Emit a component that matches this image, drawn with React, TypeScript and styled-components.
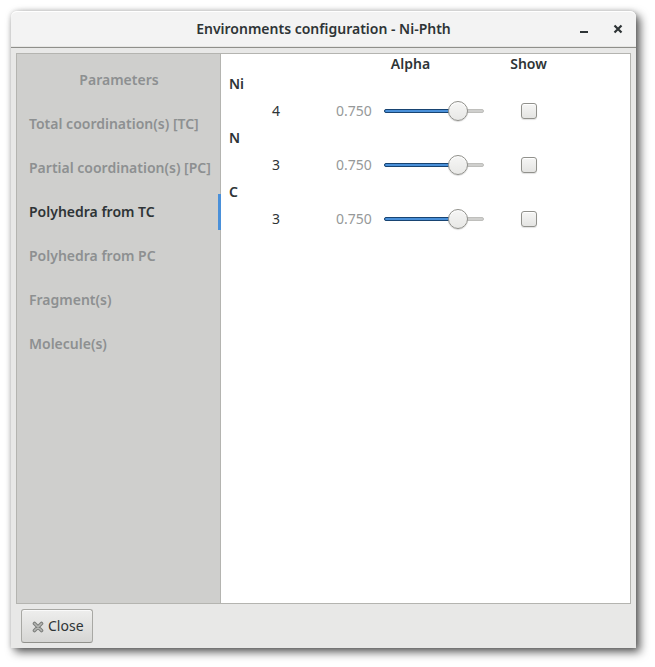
import { useState } from "react";
import styled, { createGlobalStyle } from "styled-components";

const GlobalStyle = createGlobalStyle`
  *, *::before, *::after { box-sizing: border-box; }
  body {
    margin: 0;
    background: #fff;
    color: #2e3436;
    font-family: "Noto Sans", "Open Sans", sans-serif;
    font-size: 14px;
    line-height: 20px;
  }
  button, input { font: inherit; color: inherit; margin: 0; }
`;

const Desktop = styled.main`
  display: flex;
  min-height: 100vh;
  padding: 11px 19px 19px 11px;
`;

const Window = styled.section`
  flex: 1;
  display: flex;
  flex-direction: column;
  min-width: 0;
  background: #e8e8e7;
  border-radius: 6px 6px 0 0;
  box-shadow: 0 0 5px rgba(0, 0, 0, 0.18), 4px 4px 10px rgba(0, 0, 0, 0.65);
`;

const TitleBar = styled.header`
  display: grid;
  grid-template-columns: 1fr auto 1fr;
  align-items: center;
  height: 37px;
  padding: 0 6px;
  background: #f3f3f3;
  border-bottom: 1px solid #8f8f8b;
  border-radius: 6px 6px 0 0;
  box-shadow: inset 0 1px #fff, inset 0 -1px #e6e6e4;
`;

const Title = styled.h1`
  grid-column: 2;
  margin: 0;
  font-size: 14px;
  font-weight: 600;
`;

const WindowControls = styled.div`
  display: flex;
  justify-content: flex-end;
  gap: 10px;
`;

const WindowButton = styled.button`
  display: grid;
  place-items: center;
  width: 24px;
  height: 24px;
  padding: 0;
  border: 0;
  background: none;
`;

const Notebook = styled.div`
  flex: 1;
  display: flex;
  margin: 5px 5px 0;
  border: 1px solid #b4b4b0;
  background: #fff;
`;

const TabList = styled.div`
  display: flex;
  flex-direction: column;
  gap: 8px;
  width: 204px;
  flex: none;
  padding: 8px 0;
  background: #cfcfcd;
  border-right: 1px solid #b4b4b0;
`;

const Tab = styled.button<{ $active: boolean; $centered: boolean }>`
  height: 36px;
  margin-right: -1px;
  padding: 0 9px 0 12px;
  border: 0;
  border-right: 3px solid ${(p) => (p.$active ? "#4a90d9" : "transparent")};
  background: none;
  color: ${(p) => (p.$active ? "#2e3436" : "#8d9091")};
  font-weight: 600;
  text-align: ${(p) => (p.$centered ? "center" : "left")};
  white-space: nowrap;
`;

const Panel = styled.div`
  flex: 1;
  min-width: 0;
`;

const Table = styled.table`
  width: 346px;
  table-layout: fixed;
  border-collapse: collapse;
`;

const Column = styled.col<{ $width: number }>`
  width: ${(p) => p.$width}px;
`;

const HeadCell = styled.th`
  height: 20px;
  padding: 0;
  font-weight: 600;
`;

const ElementCell = styled.th`
  height: 20px;
  padding: 0 8px;
  font-weight: 600;
  text-align: left;
`;

const Cell = styled.td`
  height: 34px;
  padding: 0;
  text-align: center;
`;

const AlphaControl = styled.div`
  display: flex;
  align-items: center;
  gap: 12px;
  padding: 0 5px;
`;

const AlphaValue = styled.output`
  width: 36px;
  color: #969999;
`;

const Slider = styled.div`
  display: grid;
  grid-template-columns: 100px;
  align-items: center;
`;

const Trough = styled.div`
  grid-area: 1 / 1;
  height: 4px;
  border: 1px solid #bfbfbc;
  border-radius: 2px;
  background: #cfcfcd;
`;

const Fill = styled.div`
  height: 4px;
  margin: -1px;
  border: 1px solid #184472;
  border-radius: 2px;
  background: #4a90d9;
`;

const Range = styled.input`
  grid-area: 1 / 1;
  appearance: none;
  width: 116px;
  height: 20px;
  margin: 0 -8px;
  background: transparent;

  &::-webkit-slider-thumb {
    appearance: none;
    width: 20px;
    height: 20px;
    border: 1px solid #91918c;
    border-radius: 50%;
    background: linear-gradient(#f6f6f5, #e8e8e6);
    box-shadow: inset 0 1px #fff, 0 1px 1px rgba(0, 0, 0, 0.15);
  }
`;

const CheckBox = styled.input`
  appearance: none;
  display: block;
  width: 16px;
  height: 16px;
  margin: 0 auto;
  border: 1px solid #91918c;
  border-radius: 3px;
  background: linear-gradient(#f6f6f5, #e4e4e2);
  box-shadow: inset 0 1px #fff, 0 1px 1px rgba(0, 0, 0, 0.12);

  &:checked { background: #4a90d9; }
`;

const Actions = styled.footer`
  display: flex;
  padding: 5px 10px;
`;

const CloseButton = styled.button`
  display: flex;
  align-items: center;
  justify-content: center;
  gap: 3px;
  height: 34px;
  padding: 0 8px 0 9px;
  border: 1px solid #a8a8a4;
  border-bottom-color: #91918c;
  border-radius: 3px;
  background: linear-gradient(#eeeeed, #d6d6d4);
  box-shadow: inset 0 1px #fafafa;
`;

const tabs = [
  "Parameters",
  "Total coordination(s) [TC]",
  "Partial coordination(s) [PC]",
  "Polyhedra from TC",
  "Polyhedra from PC",
  "Fragment(s)",
  "Molecule(s)",
];

const elements = [
  { symbol: "Ni", coordination: 4 },
  { symbol: "N", coordination: 3 },
  { symbol: "C", coordination: 3 },
];

function ElementRows({ symbol, coordination }: { symbol: string; coordination: number }) {
  const [alpha, setAlpha] = useState(0.75);
  const [shown, setShown] = useState(false);
  return (
    <tbody>
      <tr>
        <ElementCell colSpan={3}>{symbol}</ElementCell>
      </tr>
      <tr>
        <Cell>{coordination}</Cell>
        <Cell>
          <AlphaControl>
            <AlphaValue>{alpha.toFixed(3)}</AlphaValue>
            <Slider>
              <Trough>
                <Fill style={{ width: `${alpha * 100}%` }} />
              </Trough>
              <Range
                type="range"
                min={0}
                max={1}
                step={0.001}
                value={alpha}
                aria-label={`Alpha for ${symbol}`}
                onChange={(e) => setAlpha(Number(e.target.value))}
              />
            </Slider>
          </AlphaControl>
        </Cell>
        <Cell>
          <CheckBox
            type="checkbox"
            checked={shown}
            aria-label={`Show ${symbol}`}
            onChange={(e) => setShown(e.target.checked)}
          />
        </Cell>
      </tr>
    </tbody>
  );
}

export default function App() {
  const [active, setActive] = useState("Polyhedra from TC");
  return (
    <>
      <GlobalStyle />
      <Desktop>
        <Window>
          <TitleBar>
            <Title>Environments configuration - Ni-Phth</Title>
            <WindowControls>
              <WindowButton aria-label="Minimize">
                <svg width="16" height="16" viewBox="0 0 16 16">
                  <path d="M4 10h8v2H4z" fill="#2e3436" />
                </svg>
              </WindowButton>
              <WindowButton aria-label="Close window">
                <svg width="16" height="16" viewBox="0 0 16 16">
                  <path d="M4.5 4.5l7 7M11.5 4.5l-7 7" stroke="#2e3436" strokeWidth="2.2" />
                </svg>
              </WindowButton>
            </WindowControls>
          </TitleBar>
          <Notebook>
            <TabList role="tablist" aria-orientation="vertical">
              {tabs.map((name, i) => (
                <Tab
                  key={name}
                  role="tab"
                  aria-selected={name === active}
                  $active={name === active}
                  $centered={i === 0}
                  onClick={() => setActive(name)}
                >
                  {name}
                </Tab>
              ))}
            </TabList>
            <Panel role="tabpanel">
              <Table>
                <colgroup>
                  <Column $width={110} />
                  <Column $width={159} />
                  <Column $width={77} />
                </colgroup>
                <thead>
                  <tr>
                    <HeadCell />
                    <HeadCell>Alpha</HeadCell>
                    <HeadCell>Show</HeadCell>
                  </tr>
                </thead>
                {elements.map((el) => (
                  <ElementRows key={el.symbol} {...el} />
                ))}
              </Table>
            </Panel>
          </Notebook>
          <Actions>
            <CloseButton>
              <svg width="14" height="14" viewBox="0 0 14 14">
                <path d="M3.5 4.5l7 7M10.5 4.5l-7 7" stroke="#7c7e7b" strokeWidth="3.6" strokeLinecap="round" />
                <path d="M3.5 4.5l7 7M10.5 4.5l-7 7" stroke="#b5b6b3" strokeWidth="1.6" strokeLinecap="round" />
              </svg>
              Close
            </CloseButton>
          </Actions>
        </Window>
      </Desktop>
    </>
  );
}
